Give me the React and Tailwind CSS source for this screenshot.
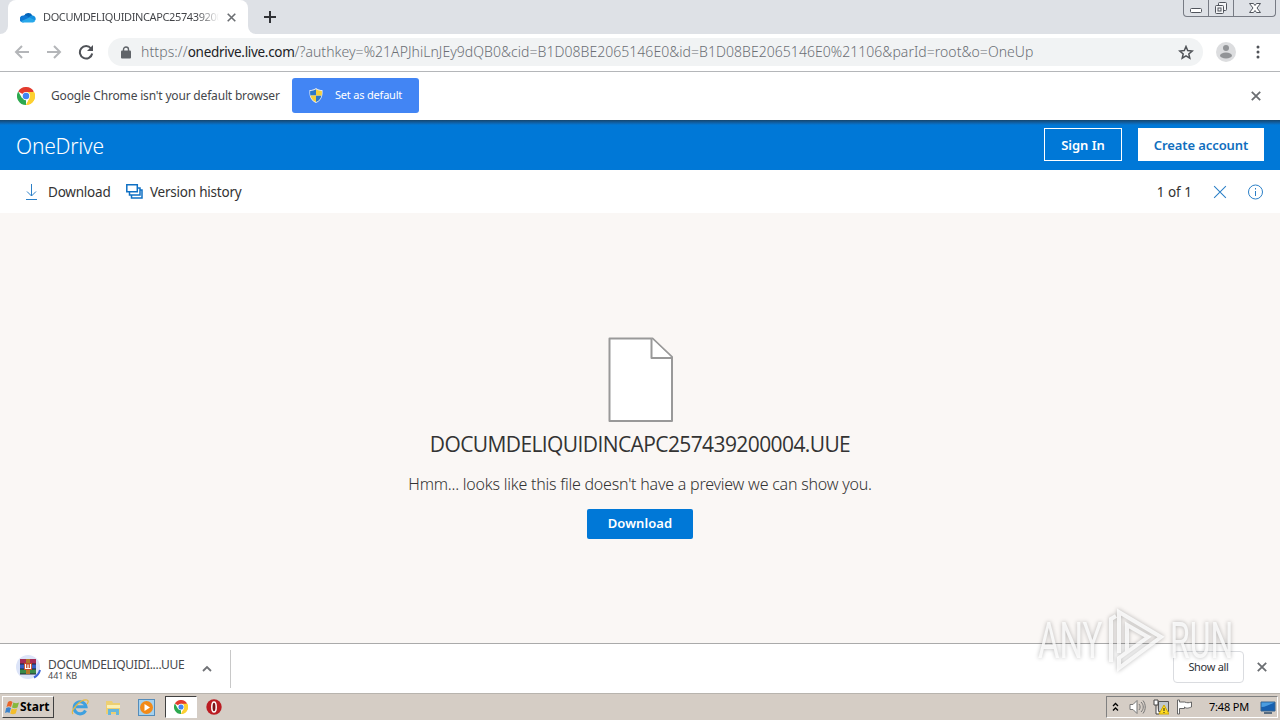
import React from 'react';

const FILE_NAME = 'DOCUMDELIQUIDINCAPC257439200004.UUE';

function ChromeLogo({ size = 18 }) {
  return (
    <svg width={size} height={size} viewBox="0 0 48 48">
      <path d="M24 24 3.2 12A24 24 0 0 1 44.8 12Z" fill="#e33b2e" />
      <path d="M24 24V48A24 24 0 0 1 3.2 12L13.6 30Z" fill="#2da94f" />
      <path d="M24 24 44.8 12A24 24 0 0 1 24 48L34.4 30Z" fill="#fdd031" />
      <path d="M24 13H45.3A24 24 0 0 1 24 48L33.5 29.5Z" fill="#fdd031" />
      <circle cx="24" cy="24" r="11" fill="#fff" />
      <circle cx="24" cy="24" r="8.7" fill="#4285f4" />
    </svg>
  );
}

function CloseIcon({ size = 10, color = '#6b6e72', width = 1.8 }) {
  return (
    <svg width={size} height={size} viewBox="0 0 10 10" stroke={color} strokeWidth={width}>
      <path d="M.8.8 9.2 9.2M9.2.8.8 9.2" />
    </svg>
  );
}

function TabStrip() {
  return (
    <div className="flex h-[34px] bg-[#dee1e6]">
      <div className="w-2 bg-white">
        <div className="h-full rounded-br-lg bg-[#dee1e6]" />
      </div>
      <div className="flex w-60 items-center rounded-t-lg bg-white pl-3">
        <svg width="16" height="11" viewBox="0 0 16 11">
          <path d="M4 4a4.6 4.6 0 0 1 8.4-.6L9 8 3 6Z" fill="#0364b8" />
          <path d="M3.600 3.400C5 3 6 3.300 7 4l5 3-9 3.500A3.500 3.500 0 0 1 3.600 3.400Z" fill="#0f78d4" />
          <path d="M9 5.500c1-1.700 2.400-2.200 3.700-2A3.500 3.500 0 0 1 15.500 8L12 8.500Z" fill="#1490df" />
          <path d="M1 9.200 9.400 5.600 15.400 8.600A2.700 2.700 0 0 1 13 10.500H3.600A3.500 3.500 0 0 1 1 9.200Z" fill="#28a8ea" />
        </svg>
        <div className="ml-[7px] w-[176px] overflow-hidden whitespace-nowrap bg-linear-to-r from-[#404246] from-88% to-transparent bg-clip-text text-[11px] tracking-[-0.38px] text-transparent">
          <span>{FILE_NAME}</span>
        </div>
        <div className="ml-2">
          <CloseIcon size={9} />
        </div>
      </div>
      <div className="w-2 bg-white">
        <div className="h-full rounded-bl-lg bg-[#dee1e6]" />
      </div>
      <svg className="mt-[11px] ml-2" width="12" height="12" stroke="#303236" strokeWidth="2">
        <path d="M6 0v12M0 6h12" />
      </svg>
      <div className="mr-1 ml-auto flex h-[17px] w-[93px] rounded-b-[4px] border border-t-0 border-[#777b84]">
        <div className="flex w-[25px] justify-center border-r border-[#777b84]">
          <svg width="14" height="16" fill="#fff" stroke="#50545c">
            <rect x="1.500" y="8.500" width="11" height="4" rx="1" />
          </svg>
        </div>
        <div className="flex w-[25px] justify-center border-r border-[#777b84]">
          <svg width="14" height="16" fill="#f4f5f7" stroke="#50545c">
            <rect x="4.500" y="2.500" width="8" height="8" rx="1" />
            <rect x="1.500" y="5.500" width="8" height="8" rx="1" />
            <rect x="4" y="8" width="3" height="3" />
          </svg>
        </div>
        <div className="flex flex-1 justify-center">
          <svg width="14" height="16" viewBox="0 0 14 16" fill="#fff" stroke="#50545c">
            <path d="M1.500 3.500h4L7 5.500l1.500-2h4L9 8l3.500 4.500h-4L7 10.500l-1.500 2h-4L5 8Z" />
          </svg>
        </div>
      </div>
    </div>
  );
}

function AddressBar() {
  return (
    <div className="flex h-[38px] items-center border-b border-[#b4b6b9] bg-white pb-px">
      <svg className="ml-[14px]" width="16" height="14" fill="none" stroke="#b4b6b9" strokeWidth="2">
        <path d="M8 1 2 7l6 6M2 7h13" />
      </svg>
      <svg className="ml-4" width="16" height="14" fill="none" stroke="#b4b6b9" strokeWidth="2">
        <path d="m8 1 6 6-6 6M14 7H1" />
      </svg>
      <svg className="ml-4" width="16" height="16" viewBox="0 0 16 16">
        <path d="M13 4.500A6.200 6.200 0 1 0 14.200 9.500" fill="none" stroke="#505358" strokeWidth="2" />
        <path d="M15 1v6H9Z" fill="#505358" />
      </svg>
      <div className="ml-[14px] flex h-7 w-[1095px] items-center rounded-full bg-[#f1f3f4] pl-[13px]">
        <svg width="10" height="13" viewBox="0 0 10 13">
          <rect y="4.500" width="10" height="8" rx="1" fill="#5f6368" />
          <path d="M2.500 5V3.500a2.500 2.500 0 0 1 5 0V5" fill="none" stroke="#5f6368" strokeWidth="1.400" />
        </svg>
        <span className="ml-[10px] whitespace-nowrap pb-px text-[14px] font-light text-[#6b6f74]">
          <span className="tracking-[0.1px]">https://</span>
          <span className="text-[13.5px] font-normal tracking-[-0.3px] text-[#202124]">onedrive.live.com</span>
          <span className="tracking-[0.04px]">
            /?authkey=%21APJhiLnJEy9dQB0&amp;cid=B1D08BE2065146E0&amp;id=B1D08BE2065146E0%21106&amp;parId=root&amp;o=OneUp
          </span>
        </span>
        <svg className="mr-[9px] ml-auto" width="16" height="15" viewBox="0 0 16 15" fill="none" stroke="#505358" strokeWidth="1.500">
          <path d="m8 1.500 1.700 4.100 4.500.4-3.400 2.900 1 4.300L8 10.900l-3.800 2.300 1-4.300L1.800 6l4.500-.4Z" />
        </svg>
      </div>
      <svg className="ml-[13px]" width="20" height="20">
        <circle cx="10" cy="10" r="10" fill="#dcdddf" />
        <circle cx="10" cy="6" r="3" fill="#929497" />
        <ellipse cx="10" cy="13.500" rx="6" ry="3" fill="#929497" />
      </svg>
      <svg className="ml-[20px]" width="4" height="14" fill="#505358">
        <circle cx="2" cy="2" r="1.500" />
        <circle cx="2" cy="7" r="1.500" />
        <circle cx="2" cy="12" r="1.500" />
      </svg>
    </div>
  );
}

function InfoBar() {
  return (
    <div className="flex h-12 items-center bg-white pb-px pl-[17px]">
      <ChromeLogo />
      <span className="ml-4 w-[241px] whitespace-nowrap text-[12px] tracking-[-0.18px] text-[#45474b]">
        Google Chrome isn't your default browser
      </span>
      <button className="flex h-[35px] w-[127px] items-center rounded-[3px] bg-[#4285f4] pl-[17px] text-[11px] text-white">
        <svg width="14" height="15" viewBox="0 0 14 15">
          <path d="M7 0c2 1.500 4 2 6.500 2 .5 6-1 10.500-6.500 13C1.500 12.500 0 8 .5 2 3 2 5 1.500 7 0Z" fill="#e8ecf2" />
          <path d="M7 1.200V7.500H1.300C1.100 6 1 4.500 1.200 2.900 3.500 2.800 5 2.500 7 1.200ZM7 7.500h5.500C11.700 10.700 10 12.700 7 14Z" fill="#2c78c9" />
          <path d="M7 1.200V7.500h5.700c.2-1.500.3-3 .1-4.600C10.500 2.800 9 2.500 7 1.200ZM7 7.500H1.500C2.300 10.700 4 12.700 7 14Z" fill="#f4d03c" />
        </svg>
        <span className="ml-[12px] whitespace-nowrap tracking-[-0.2px]">Set as default</span>
      </button>
      <div className="mr-[19px] ml-auto">
        <CloseIcon />
      </div>
    </div>
  );
}

function OneDriveHeader() {
  return (
    <header className="flex h-[50px] items-center bg-linear-to-b from-[#15466e] to-[#0078d7] to-[5px] px-4 pb-px font-semibold">
      <span className="mr-auto pt-[5px] text-[21px] font-light tracking-[-0.25px] text-white">OneDrive</span>
      <button className="h-[33px] w-[78px] border border-white pt-0.5 text-[13px] text-white">Sign In</button>
      <button className="ml-4 h-[33px] w-[126px] bg-white pt-0.5 text-[13px] tracking-[-0.1px] whitespace-nowrap text-[#106ebe]">
        Create account
      </button>
    </header>
  );
}

function CommandBar() {
  return (
    <div className="flex h-[43px] items-center bg-white pl-[25px] text-[13.5px] tracking-[-0.22px] text-[#333]">
      <svg width="13" height="16" fill="none" stroke="#2b7fc7">
        <path d="M6.500 0v12M2 7.500l4.500 4.500L11 7.500M1 15.500h11" />
      </svg>
      <span className="ml-[10px] w-[78px] pt-0.5">Download</span>
      <svg width="17" height="15" fill="#fff" stroke="#0f70c4" strokeWidth="1.500">
        <path d="M5.500 6h10.500v8H5.500Z" />
        <path d="M3.500 4h10.500v7H3.500Z" />
        <path d="M.8.800h10.500v7H.8Z" />
      </svg>
      <span className="ml-[7px] pt-0.5">Version history</span>
      <span className="mr-[21px] ml-auto pt-0.5 tracking-normal">1 of 1</span>
      <CloseIcon size={14} color="#2b7fc7" width={0.75} />
      <svg className="mr-4 ml-5" width="17" height="16" fill="none" stroke="#2b7fc7">
        <circle cx="8.500" cy="8" r="7" />
        <path d="M8.500 7v5M8.500 4v1.500" />
      </svg>
    </div>
  );
}

function Watermark() {
  return (
    <div className="absolute top-[607px] left-[1038px] flex h-[68px] w-[196px] items-center justify-between font-['Roboto',sans-serif] text-[50px] leading-none text-white/80 drop-shadow-[0_0_2px_rgba(0,0,0,0.35)]">
      <span className="w-[64px] origin-left scale-x-[0.66]">ANY</span>
      <svg className="shrink-0" width="60" height="66" viewBox="0 0 60 66" fill="none" stroke="currentColor" strokeWidth="4">
        <path d="M5 54V11L10 8M13 45V4l42 25-42 31V50l29-21L21 17v27" />
      </svg>
      <span className="w-[64px] origin-left scale-x-[0.64]">RUN</span>
    </div>
  );
}

function Preview() {
  return (
    <main className="flex h-[430px] flex-col items-center bg-[#faf7f5] pt-[124px] text-[#333]">
      <svg width="65" height="86" fill="#fff" stroke="#999" strokeWidth="2" strokeLinejoin="round">
        <path d="M1.500 1.500H44.500L64 20V84H1.500Z" />
        <path d="M43.500 1.500V21H64" />
      </svg>
      <h1 className="mt-[4px] h-[34px] font-['Open_Sans',sans-serif] text-[21px] leading-[34px] tracking-[-0.6px] whitespace-nowrap">
        {FILE_NAME}
      </h1>
      <p className="mt-[11px] h-6 text-[16px] leading-6 font-light tracking-[-0.22px] whitespace-nowrap">
        Hmm... looks like this file doesn't have a preview we can show you.
      </p>
      <button className="mt-[13px] h-[30px] w-[106px] rounded-[2px] bg-[#0078d7] text-[13px] font-semibold tracking-[0.1px] text-white">
        Download
      </button>
    </main>
  );
}

function DownloadShelf() {
  return (
    <div className="flex h-[50px] items-center border-t border-[#aaa] bg-white pb-[3px] pl-4">
      <svg className="mt-0.5" width="26" height="26" viewBox="0 0 26 26">
        <circle cx="12" cy="12" r="12" fill="#dce4f8" />
        <path d="M4 4h16v5H4Z" fill="#a62b55" />
        <path d="M4 9h16v5H4Z" fill="#365ec5" />
        <path d="M4 14h16v5H4Z" fill="#398b49" />
        <path d="M4 9h16M4 14h16M4 19h16" stroke="#202638" />
        <path d="M10 4h4v15h-4Z" fill="#b57728" />
        <path d="M8 8h8v7H8Z" fill="#c64b25" />
        <path d="M9.500 9v4.500h5V9M12 13.500V9.500" fill="none" stroke="#fff" strokeWidth="1.200" />
        <path d="M24 15c-1 4-3 6-6 7.500" fill="none" stroke="#3d65d8" strokeWidth="2" />
      </svg>
      <div className="ml-[6px] w-[154px] pt-[5px] whitespace-nowrap text-[#46484c]">
        <div className="text-[12px] leading-[13px] tracking-[-0.32px]">DOCUMDELIQUIDI....UUE</div>
        <div className="text-[9px] leading-[10px]">441 KB</div>
      </div>
      <svg className="mt-[3px]" width="10" height="7" fill="none" stroke="#707276" strokeWidth="1.800">
        <path d="m1 6 4-4 4 4" />
      </svg>
      <div className="mt-[3px] ml-[18px] h-[38px] w-px bg-[#c8c8c8]" />
      <button className="mr-[13px] ml-auto h-8 w-[71px] rounded-[4px] border border-[#dadce0] text-[11px] tracking-[-0.3px] text-[#303236]">
        Show all
      </button>
      <div className="mr-[13px]">
        <CloseIcon />
      </div>
    </div>
  );
}

function QuickLaunch() {
  return (
    <>
      <svg className="ml-[17px]" width="18" height="18" viewBox="0 0 18 18" fill="none">
        <path d="M14.500 12.500a6 6 0 1 1 .5-3.800H5" stroke="#3fa0df" strokeWidth="3" />
        <path d="M2 16C-1 13 9 1 16 2c2 .5 1 3 0 4" stroke="#e6b940" strokeWidth="1.200" />
      </svg>
      <svg className="ml-4" width="17" height="17" viewBox="0 0 17 17">
        <path d="M1 4V2h6l1 2h7v11H1Z" fill="#edcf72" />
        <path d="M2 6h13v3H2Z" fill="#fbf0b4" />
        <path d="M3 10h11v6h-3v-3H6v3H3Z" fill="#67b7dc" />
      </svg>
      <svg className="ml-[16px]" width="17" height="17" viewBox="0 0 17 17">
        <rect x=".5" y=".5" width="16" height="16" fill="#a5d1ee" stroke="#548cba" />
        <circle cx="8.500" cy="8.500" r="6.500" fill="#f28a19" />
        <path d="m6.500 5 5.500 3.500L6.500 12Z" fill="#fff" />
      </svg>
      <div className="ml-[10px] flex h-[22px] w-8 items-center justify-center border border-t-[#404040] border-r-white border-b-white border-l-[#404040] bg-white">
        <ChromeLogo size={14} />
      </div>
      <svg className="ml-[9px]" width="16" height="16">
        <circle cx="8" cy="8" r="7.700" fill="#bb1c22" />
        <ellipse cx="8" cy="8" rx="2.200" ry="5" fill="#7c1217" stroke="#fff" strokeWidth="1.500" />
      </svg>
    </>
  );
}

function Taskbar() {
  return (
    <div className="flex h-[27px] items-center border-t border-[#b8b4ae] bg-[#d5cdc5] pl-[2px]">
      <button className="flex h-[22px] w-[52px] items-center border border-t-white border-r-[#404040] border-b-[#404040] border-l-white pl-[2px] text-[12px] font-bold text-black">
        <svg className="shrink-0" width="15" height="15" viewBox="0 0 15 15">
          <path d="M3 2c2-1.500 3-1 4.500 0L6 7C4.500 6 3 6 1.500 7Z" fill="#e96528" />
          <path d="M8.300 2.500c2 1 3.500 1 5.700 0l-1.500 5c-2 1-3.500 1-5.500 0Z" fill="#86b83b" />
          <path d="M1.200 8C3 7 4.500 7 6 8l-1.500 5C3 12 1.500 12 0 13Z" fill="#3b83cc" />
          <path d="M6.700 8.500c2 1 3.500 1 5.500 0l-1.500 5c-2 1-3.500 1-5.500 0Z" fill="#f3bd2b" />
        </svg>
        <span>Start</span>
      </button>
      <QuickLaunch />
      <div className="mr-[2px] ml-auto flex h-[22px] w-[172px] items-center border border-t-[#808080] border-r-white border-b-white border-l-[#808080] pl-[5px]">
        <svg width="7" height="10" fill="none" stroke="#000" strokeWidth="1.300">
          <path d="m1 4 2.500-2.500L6 4M1 8.500 3.500 6 6 8.500" />
        </svg>
        <svg className="ml-[10px]" width="17" height="16" fill="#fff" stroke="#777">
          <path d="M1 5.500h3l4-4v13l-4-4H1Z" />
          <path d="M10 5c1.500 2 1.500 4 0 6M12 3c3 3 3 7 0 10M14 1.500c3 4 3 9 0 13" fill="none" />
        </svg>
        <svg className="ml-[7px]" width="16" height="16">
          <path d="M5.500 2.500h10v10h-10Z" fill="#bfc7cc" stroke="#555" />
          <path d="M1 1h4v5H1ZM3 6v9h3" fill="#fff" stroke="#444" />
          <path d="m11 6 5 9H6Z" fill="#ffdc21" stroke="#d0a800" />
          <path d="M11 9v3M11 13v1" stroke="#222" />
        </svg>
        <svg className="ml-[7px]" width="17" height="16" fill="#fff" stroke="#666">
          <path d="M1.500 1v14h2V9.500h5V8c2 2 4 1 7 0V3c-3 1-4 1-7 0H3.500V1Z" />
        </svg>
        <span className="ml-[16px] w-[51px] whitespace-nowrap text-[11px] tracking-[-0.2px] text-black">7:48 PM</span>
        <svg width="16" height="13">
          <path d="M1 1h14v9H1Z" fill="#1760b0" stroke="#38648e" />
          <path d="M1.500 6C6 6 10 3 14.500 1.500h-13Z" fill="#4b9de0" />
          <path d="M4 12h8" stroke="#596d80" strokeWidth="2" />
        </svg>
      </div>
    </div>
  );
}

export default function App() {
  return (
    <div className="relative h-[720px] w-[1280px] overflow-hidden bg-white font-['Noto_Sans','Open_Sans',sans-serif]">
      <TabStrip />
      <AddressBar />
      <InfoBar />
      <OneDriveHeader />
      <CommandBar />
      <Preview />
      <DownloadShelf />
      <Taskbar />
      <Watermark />
    </div>
  );
}
